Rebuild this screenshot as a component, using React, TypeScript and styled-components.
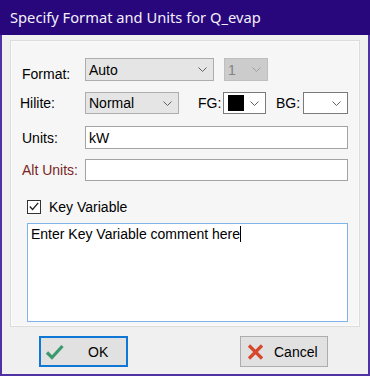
import React from "react";
import styled, { createGlobalStyle } from "styled-components";

const Global = createGlobalStyle`
  html, body { margin: 0; padding: 0; background: #f0f0f0; }
  body { font-family: "Liberation Sans", Arial, sans-serif; font-size: 14px; color: #000; }
  * { box-sizing: border-box; }
`;

const Window = styled.div`
  width: 370px;
  height: 376px;
  display: flex;
  flex-direction: column;
  background: #f0f0f0;
`;

const TitleBar = styled.div`
  height: 35px;
  flex: none;
  background: #28077c;
  color: #f2f0fa;
  font-family: "Noto Sans", "Open Sans", sans-serif;
  font-size: 14.7px;
  line-height: 35px;
  padding-left: 10px;
  white-space: nowrap;
`;

const Body = styled.div`
  flex: 1;
  display: flex;
  flex-direction: column;
  border: 2px solid #4e31a3;
  border-top: 0;
  padding: 5px 8px 0 8px;
`;

const Panel = styled.div`
  height: 287px;
  border: 1px solid #dcdcdc;
  box-shadow: inset 0 0 0 1px #fbfbfb;
  background: #f6f6f6;
  padding: 17px 11px 0 11px;
  display: flex;
  flex-direction: column;
`;

const Row = styled.div<{ $top?: number; $h: number }>`
  display: flex;
  align-items: flex-end;
  height: ${(p) => p.$h}px;
  margin-top: ${(p) => p.$top ?? 0}px;
`;

const Label = styled.span<{ $w?: number; $ml?: number; $drop?: number; $red?: boolean }>`
  width: ${(p) => p.$w ?? 63}px;
  flex: none;
  line-height: 16px;
  margin-left: ${(p) => p.$ml ?? 0}px;
  margin-bottom: ${(p) => -(p.$drop ?? 0)}px;
  color: ${(p) => (p.$red ? "#7a1f1f" : "#000")};
  white-space: nowrap;
`;

const Combo = styled.div<{ $w: number; $kind: "gray" | "white" | "disabled"; $ml?: number }>`
  width: ${(p) => p.$w}px;
  height: 100%;
  flex: none;
  margin-left: ${(p) => p.$ml ?? 0}px;
  display: flex;
  align-items: center;
  padding: 0 6px 0 2px;
  border: 1px solid ${(p) => (p.$kind === "white" ? "#7a7a7a" : p.$kind === "disabled" ? "#bfbfbf" : "#adadad")};
  background: ${(p) => (p.$kind === "white" ? "#fff" : p.$kind === "disabled" ? "#cccccc" : "#e5e5e5")};
  color: ${(p) => (p.$kind === "disabled" ? "#838383" : "#000")};
  line-height: 16px;
`;

const ComboText = styled.span`
  flex: 1;
  padding-left: 1px;
`;

const Swatch = styled.span`
  width: 16px;
  height: 16px;
  background: #000;
  margin-left: 2px;
  flex: none;
`;

const TextBox = styled.div<{ $w: number }>`
  width: ${(p) => p.$w}px;
  height: 100%;
  border: 1px solid #a3a3a3;
  background: #fff;
  padding: 0 3px;
  display: flex;
  align-items: center;
  line-height: 16px;
`;

const CheckRow = styled.label`
  display: flex;
  align-items: center;
  gap: 8px;
  margin-top: 18px;
  margin-left: 5px;
  height: 15px;
`;

const CheckBox = styled.span`
  width: 14px;
  height: 14px;
  border: 1px solid #333;
  background: #fff;
  display: flex;
  align-items: center;
  justify-content: center;
`;

const Comment = styled.div`
  margin-top: 9px;
  margin-left: 5px;
  width: 321px;
  height: 99px;
  border: 1px solid #7eb4ea;
  background: #fff;
  padding: 2px 3px;
  line-height: 16px;
`;

const Caret = styled.span`
  display: inline-block;
  width: 1px;
  height: 16px;
  background: #000;
  vertical-align: top;
`;

const ButtonBar = styled.div`
  display: flex;
  justify-content: space-between;
  padding: 9px 32px 0 29px;
`;

const Button = styled.div<{ $default?: boolean }>`
  width: ${(p) => (p.$default ? 89 : 88)}px;
  height: 31px;
  background: #e1e1e1;
  border: ${(p) => (p.$default ? "2px solid #0f78d7" : "1px solid #adadad")};
  display: flex;
  align-items: center;
  padding-left: ${(p) => (p.$default ? 4 : 6)}px;
  line-height: 16px;
`;

const ButtonText = styled.span<{ $ml: number }>`
  margin-left: ${(p) => p.$ml}px;
`;

const Chevron = ({ color = "#606060" }: { color?: string }) => (
  <svg width="9" height="5" viewBox="0 0 9 5" style={{ flex: "none" }}>
    <polyline points="0.5,0.5 4.5,4.5 8.5,0.5" fill="none" stroke={color} strokeWidth="1" />
  </svg>
);

export default function App() {
  return (
    <>
      <Global />
      <Window>
        <TitleBar>Specify Format and Units for Q_evap</TitleBar>
        <Body>
          <Panel>
            <Row $h={23}>
              <Label $drop={1}>Format:</Label>
              <Combo $w={129} $kind="gray">
                <ComboText>Auto</ComboText>
                <Chevron />
              </Combo>
              <Combo $w={44} $kind="disabled" $ml={10}>
                <ComboText>1</ComboText>
                <Chevron color="#a0a0a0" />
              </Combo>
            </Row>
            <Row $h={22} $top={11}>
              <Label $ml={-2} $w={65} $drop={-3}>Hilite:</Label>
              <Combo $w={94} $kind="gray">
                <ComboText>Normal</ComboText>
                <Chevron />
              </Combo>
              <Label $w={25} $ml={19} $drop={-3}>FG:</Label>
              <Combo $w={43} $kind="white">
                <Swatch />
                <ComboText />
                <Chevron />
              </Combo>
              <Label $w={27} $ml={10} $drop={-3}>BG:</Label>
              <Combo $w={45} $kind="white">
                <ComboText />
                <Chevron />
              </Combo>
            </Row>
            <Row $h={23} $top={12}>
              <Label $drop={-3}>Units:</Label>
              <TextBox $w={263}>kW</TextBox>
            </Row>
            <Row $h={22} $top={10}>
              <Label $drop={-3} $red>Alt Units:</Label>
              <TextBox $w={263} />
            </Row>
            <CheckRow>
              <CheckBox>
                <svg width="10" height="9" viewBox="0 0 10 9">
                  <polyline points="0.8,4.5 3.6,7.5 9.2,0.8" fill="none" stroke="#222" strokeWidth="1.3" />
                </svg>
              </CheckBox>
              <span>Key Variable</span>
            </CheckRow>
            <Comment>
              Enter Key Variable comment here<Caret />
            </Comment>
          </Panel>
          <ButtonBar>
            <Button $default>
              <svg width="19" height="16" viewBox="0 0 19 16">
                <polyline points="2,8.5 7,13.5 17.5,2" fill="none" stroke="#3a9a6e" strokeWidth="3.2" />
              </svg>
              <ButtonText $ml={24}>OK</ButtonText>
            </Button>
            <Button>
              <svg width="17" height="16" viewBox="0 0 17 16">
                <path d="M2,1.5 L15,14.5 M15,1.5 L2,14.5" fill="none" stroke="#d6482b" strokeWidth="3.2" />
              </svg>
              <ButtonText $ml={10}>Cancel</ButtonText>
            </Button>
          </ButtonBar>
        </Body>
      </Window>
    </>
  );
}
